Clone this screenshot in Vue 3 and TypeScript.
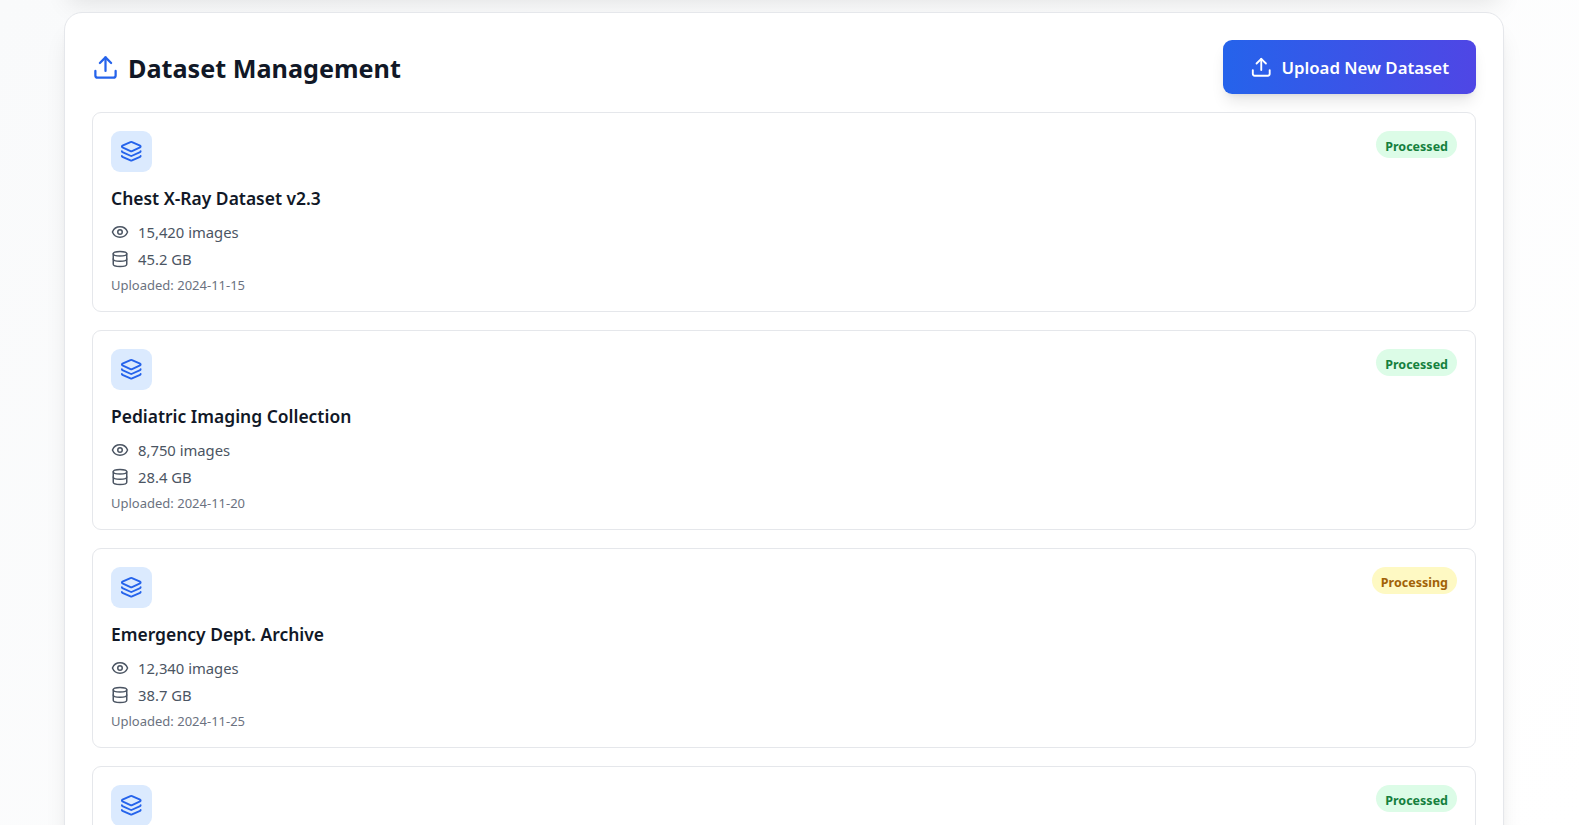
<script setup lang="ts">
interface Dataset {
  name?: string;
  images?: string;
  size?: string;
  uploaded?: string;
  status: "Processed" | "Processing";
}

const datasets: Dataset[] = [
  { name: "Chest X-Ray Dataset v2.3", images: "15,420 images", size: "45.2 GB", uploaded: "2024-11-15", status: "Processed" },
  { name: "Pediatric Imaging Collection", images: "8,750 images", size: "28.4 GB", uploaded: "2024-11-20", status: "Processed" },
  { name: "Emergency Dept. Archive", images: "12,340 images", size: "38.7 GB", uploaded: "2024-11-25", status: "Processing" },
  // only the top of this card is on screen
  { status: "Processed" },
];
</script>

<template>
  <div class="page">
    <section class="panel">
      <header class="panel-head">
        <h1 class="panel-title">
          <svg class="title-icon" viewBox="0 0 24 24" fill="none" stroke="currentColor" stroke-width="2" stroke-linecap="round" stroke-linejoin="round">
            <path d="M21 15v4a2 2 0 0 1-2 2H5a2 2 0 0 1-2-2v-4" />
            <polyline points="17 8 12 3 7 8" />
            <line x1="12" y1="3" x2="12" y2="15" />
          </svg>
          <span class="title-text">Dataset Management</span>
        </h1>
        <button class="upload-btn">
          <svg class="btn-icon" viewBox="0 0 24 24" fill="none" stroke="currentColor" stroke-width="2" stroke-linecap="round" stroke-linejoin="round">
            <path d="M21 15v4a2 2 0 0 1-2 2H5a2 2 0 0 1-2-2v-4" />
            <polyline points="17 8 12 3 7 8" />
            <line x1="12" y1="3" x2="12" y2="15" />
          </svg>
          Upload New Dataset
        </button>
      </header>

      <div class="list">
        <article class="item" v-for="(item, index) in datasets" :key="index">
          <div class="item-top">
            <div class="item-icon">
              <svg viewBox="0 0 24 24" fill="none" stroke="currentColor" stroke-width="2" stroke-linecap="round" stroke-linejoin="round">
                <path d="M12.83 2.18a2 2 0 0 0-1.66 0L2.6 6.08a1 1 0 0 0 0 1.83l8.58 3.91a2 2 0 0 0 1.66 0l8.58-3.9a1 1 0 0 0 0-1.83z" />
                <path d="M2 12a1 1 0 0 0 .58.91l8.6 3.91a2 2 0 0 0 1.65 0l8.58-3.9A1 1 0 0 0 22 12" />
                <path d="M2 17a1 1 0 0 0 .58.91l8.6 3.91a2 2 0 0 0 1.65 0l8.58-3.9A1 1 0 0 0 22 17" />
              </svg>
            </div>
            <span class="badge" :class="item.status === 'Processed' ? 'done' : 'busy'">{{ item.status }}</span>
          </div>
          <template v-if="item.name">
            <h3 class="item-name">{{ item.name }}</h3>
            <div class="meta">
              <svg viewBox="0 0 24 24" fill="none" stroke="currentColor" stroke-width="2" stroke-linecap="round" stroke-linejoin="round">
                <path d="M2.062 12.348a1 1 0 0 1 0-.696 10.75 10.75 0 0 1 19.876 0 1 1 0 0 1 0 .696 10.75 10.75 0 0 1-19.876 0" />
                <circle cx="12" cy="12" r="3" />
              </svg>
              <span>{{ item.images }}</span>
            </div>
            <div class="meta">
              <svg viewBox="0 0 24 24" fill="none" stroke="currentColor" stroke-width="2" stroke-linecap="round" stroke-linejoin="round">
                <ellipse cx="12" cy="5" rx="9" ry="3" />
                <path d="M3 5v14a9 3 0 0 0 18 0V5" />
                <path d="M3 12a9 3 0 0 0 18 0" />
              </svg>
              <span>{{ item.size }}</span>
            </div>
            <p class="uploaded">Uploaded: {{ item.uploaded }}</p>
          </template>
        </article>
      </div>
    </section>
  </div>
</template>

<style>
html {
  font-size: 18px;
  overflow: hidden;
}
body {
  height: 825px;
  overflow: hidden;
  background: #fff;
}
</style>

<style scoped>
.page {
  position: relative;
  box-sizing: border-box;
  height: 825px;
  overflow: hidden;
  padding: 12px 75px 0 64px;
  background: linear-gradient(135deg, #f9fafb 0%, #ffffff 100%);
  font-family: "Noto Sans", "Liberation Sans", sans-serif;
}

/* shadow of the panel scrolled off above the fold */
.page::before {
  content: "";
  position: absolute;
  left: 64px;
  right: 75px;
  top: -60px;
  height: 48px;
  box-shadow: 0 20px 25px -5px rgba(0, 0, 0, 0.1), 0 8px 10px -6px rgba(0, 0, 0, 0.1);
}

.panel {
  position: relative;
  box-sizing: border-box;
  padding: 1.5rem;
  border: 1px solid #e5e7eb;
  border-radius: 1rem;
  background: #fff;
  box-shadow: 0 20px 25px -5px rgba(0, 0, 0, 0.1), 0 8px 10px -6px rgba(0, 0, 0, 0.1);
}

.panel-head {
  display: flex;
  align-items: center;
  justify-content: space-between;
  margin-bottom: 1rem;
}

.panel-title {
  display: flex;
  align-items: center;
  gap: 0.5rem;
  margin: 0;
  font-size: 25.2px;
  line-height: 2rem;
  font-weight: 700;
  color: #111827;
}

.title-text {
  padding-top: 2px;
}

.title-icon {
  width: 1.5rem;
  height: 1.5rem;
  color: #2563eb;
}

.upload-btn {
  display: flex;
  align-items: center;
  gap: 0.5rem;
  padding: 0.75rem 1.5rem;
  border: none;
  border-radius: 0.5rem;
  background: linear-gradient(to right, #2563eb, #4f46e5);
  color: #fff;
  font-family: inherit;
  font-size: 16.8px;
  line-height: 1.5rem;
  font-weight: 600;
  box-shadow: 0 10px 15px -3px rgba(0, 0, 0, 0.1), 0 4px 6px -4px rgba(0, 0, 0, 0.1);
}

.btn-icon {
  width: 1.25rem;
  height: 1.25rem;
}

.list {
  display: flex;
  flex-direction: column;
  gap: 1rem;
}

.item {
  padding: 1rem;
  border: 1px solid #e5e7eb;
  border-radius: 0.5rem;
  background: #fff;
}

.item-top {
  display: flex;
  align-items: flex-start;
  justify-content: space-between;
  margin-bottom: 0.75rem;
}

.item-icon {
  display: flex;
  align-items: center;
  justify-content: center;
  width: 2.25rem;
  height: 2.25rem;
  border-radius: 0.5rem;
  background: #dbeafe;
  color: #2563eb;
}

.item-icon svg {
  width: 1.25rem;
  height: 1.25rem;
}

.badge {
  padding: 7px 0.5rem 2px;
  border-radius: 9999px;
  font-size: 12.5px;
  line-height: 1rem;
  font-weight: 700;
}

.done {
  background: #dcfce7;
  color: #15803d;
}

.busy {
  background: #fef9c3;
  color: #a16207;
}

.item-name {
  margin: 0 0 0.5rem;
  font-size: 17.45px;
  line-height: 1.5rem;
  font-weight: 600;
  color: #111827;
}

.meta {
  display: flex;
  align-items: center;
  gap: 0.5rem;
  margin-bottom: 0.25rem;
  font-size: 14.8px;
  line-height: 1.25rem;
  color: #4b5563;
}

.meta svg {
  width: 1rem;
  height: 1rem;
  flex-shrink: 0;
}

.uploaded {
  margin: 0 0 -1px;
  padding-top: 1px;
  font-size: 13px;
  line-height: 1rem;
  color: #6b7280;
}
</style>
